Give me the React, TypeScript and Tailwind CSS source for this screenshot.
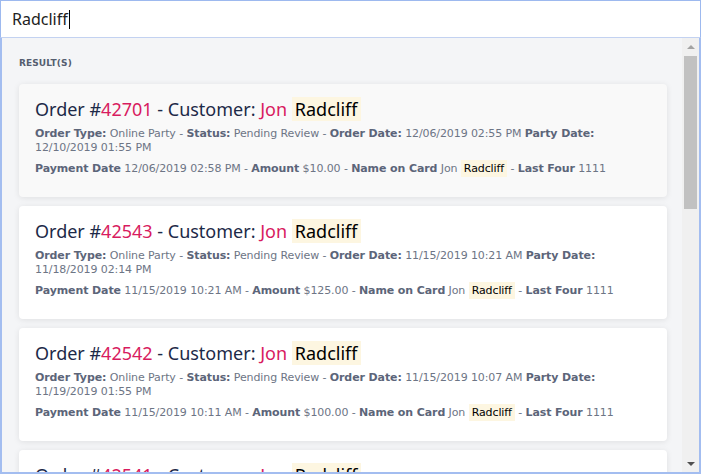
import React from "react";

type Order = {
  id: string;
  orderDate: string;
  partyDate: string;
  paymentDate: string;
  amount: string;
  active?: boolean;
};

const orders: Order[] = [
  { id: "42701", orderDate: "12/06/2019 02:55 PM", partyDate: "12/10/2019 01:55 PM", paymentDate: "12/06/2019 02:58 PM", amount: "$10.00", active: true },
  { id: "42543", orderDate: "11/15/2019 10:21 AM", partyDate: "11/18/2019 02:14 PM", paymentDate: "11/15/2019 10:21 AM", amount: "$125.00" },
  { id: "42542", orderDate: "11/15/2019 10:07 AM", partyDate: "11/19/2019 01:55 PM", paymentDate: "11/15/2019 10:11 AM", amount: "$100.00" },
  { id: "42541", orderDate: "11/15/2019 10:01 AM", partyDate: "11/19/2019 01:55 PM", paymentDate: "11/15/2019 10:05 AM", amount: "$100.00" },
];

const B = ({ children }: { children: React.ReactNode }) => (
  <span className="font-bold text-[#5c6579]">{children}</span>
);

function Card({ o }: { o: Order }) {
  return (
    <div
      className={`shrink-0 rounded-[4px] px-4 pt-[12px] pb-[21px] shadow-[0_1px_6px_rgba(0,0,0,0.09)] ${
        o.active ? "bg-[#f9f9f9]" : "bg-white"
      }`}
    >
      <div className="text-[18px] leading-[26px] text-[#1d2a48] font-['Segoe_UI','Noto_Sans',sans-serif]">
        Order #<span className="text-[#d81b60]">{o.id}</span> - Customer:{" "}
        <span className="text-[#d81b60]">Jon</span>{" "}
        <span className="bg-[#fdf6e1] text-black px-[3px]">Radcliff</span>
      </div>
      <div className="mt-[5px] text-[11px] leading-[14px] text-[#6d7585] font-['DejaVu_Sans',sans-serif] tracking-[-0.1px]">
        <B>Order Type:</B> Online Party - <B>Status:</B> Pending Review - <B>Order Date:</B> {o.orderDate} <B>Party Date:</B>
        <br />
        {o.partyDate}
      </div>
      <div className="mt-[7px] text-[11px] leading-[14px] text-[#6d7585] font-['DejaVu_Sans',sans-serif] tracking-[-0.1px]">
        <B>Payment Date</B> {o.paymentDate} - <B>Amount</B> {o.amount} - <B>Name on Card</B> Jon{" "}
        <span className="bg-[#fdf6e1] text-black px-[3px] py-[2px]">Radcliff</span> - <B>Last Four</B> 1111
      </div>
    </div>
  );
}

export default function App() {
  return (
    <div className="w-[701px] h-[474px] bg-white flex flex-col overflow-hidden">
      <div className="h-[38px] shrink-0 border border-[#9db9ef] border-b-[#c3d2f1] bg-white flex items-center px-[11px]">
        <span className="text-[16px] text-[#222] font-['Segoe_UI','Noto_Sans',sans-serif]">Radcliff</span>
        <span className="w-px h-[19px] bg-black ml-[1px]" />
      </div>
      <div className="flex-1 min-h-0 flex border-x-2 border-b-2 border-[#a3bdf0] bg-[#f4f5f7]">
        <div className="flex-1 min-w-0 overflow-hidden pl-[17px] pr-[15px]">
          <div className="pt-[19px] pb-[13px] text-[9px] font-bold text-[#555e70] font-['DejaVu_Sans',sans-serif] tracking-[0.1px]">
            RESULT(S)
          </div>
          <div className="flex flex-col gap-[9px]">
            {orders.map((o) => (
              <Card key={o.id} o={o} />
            ))}
          </div>
        </div>
        <div className="w-[17px] shrink-0 bg-[#f0f0f0] flex flex-col items-center">
          <div className="h-[18px] flex items-center justify-center">
            <div className="w-0 h-0 border-x-[4px] border-x-transparent border-b-[4px] border-b-[#a3a3a3]" />
          </div>
          <div className="w-[13px] h-[153px] bg-[#c1c1c1]" />
          <div className="flex-1" />
          <div className="h-[17px] flex items-center justify-center">
            <div className="w-0 h-0 border-x-[4px] border-x-transparent border-t-[4px] border-t-[#505050]" />
          </div>
        </div>
      </div>
    </div>
  );
}
